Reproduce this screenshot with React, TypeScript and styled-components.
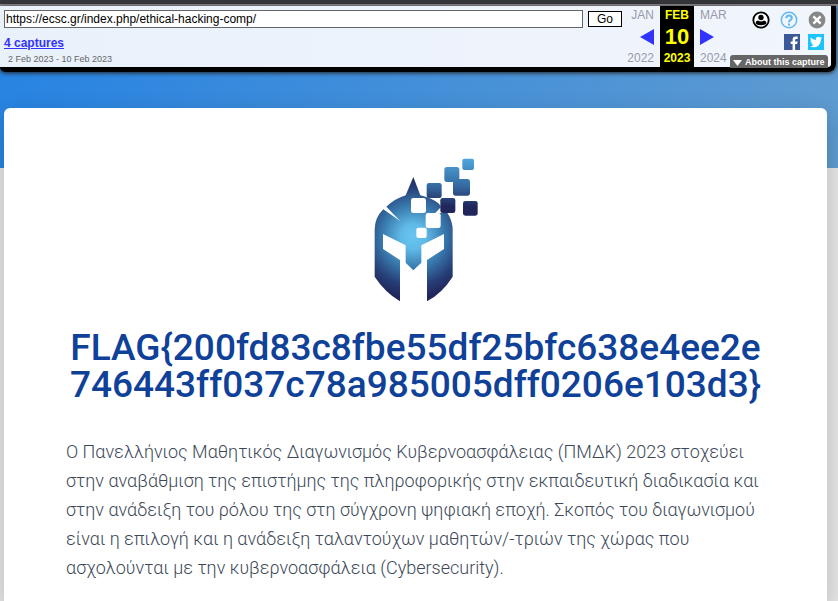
import React from "react";
import styled, { createGlobalStyle } from "styled-components";

const GlobalStyle = createGlobalStyle`
  * { box-sizing: border-box; }
  body {
    margin: 0;
    background: #e6e6e6;
    font-family: Roboto, "Noto Sans", sans-serif;
  }
`;

const Page = styled.div`
  min-height: 100vh;
  overflow: hidden;
  display: flex;
  flex-direction: column;
  background: linear-gradient(100deg, #2783e2 0%, #5f9bd0 100%) top / 100% 168px no-repeat;
`;

const BrowserEdge = styled.div`
  height: 6px;
  background: #35363a;
  border-bottom: 2px solid #88868b;
`;

const Toolbar = styled.header`
  display: flex;
  align-items: stretch;
  height: 66px;
  margin-right: 2px;
  padding-left: 4px;
  border: solid #000;
  border-width: 0 5px 5px 0;
  border-radius: 0 0 8px 5px;
  background: linear-gradient(90deg, #e9f1fb, #f1f5fc);
  box-shadow: 0 1px 4px #222;
  font-family: "Liberation Sans", Arial, sans-serif;
`;

const Lookup = styled.div`
  flex: 1;
  min-width: 0;
  padding-top: 4px;
`;

const UrlForm = styled.form`
  display: flex;
  align-items: center;
  gap: 5px;
`;

const UrlInput = styled.input`
  flex: 1;
  min-width: 0;
  height: 18px;
  padding: 0 1px;
  border: 1px solid #666;
  border-radius: 0;
  background: #fff;
  color: #000;
  font: 12px "Liberation Sans", Arial, sans-serif;
`;

const GoButton = styled.button`
  width: 34px;
  height: 16px;
  padding: 0;
  border: 1px solid #000;
  background: #fff;
  color: #000;
  font: 12px/14px "Liberation Sans", Arial, sans-serif;
`;

const CapturesLink = styled.a`
  display: block;
  width: max-content;
  margin-top: 8px;
  color: #33f;
  font-size: 12px;
  line-height: 14px;
  font-weight: bold;
`;

const CaptureRange = styled.div`
  padding: 4px 0 0 4px;
  color: #666;
  font-size: 9px;
  line-height: 10px;
`;

const MonthColumn = styled.div<{ $side?: "left" | "right" }>`
  display: flex;
  flex-direction: column;
  justify-content: space-between;
  align-items: ${(p) => (p.$side === "left" ? "flex-end" : "flex-start")};
  width: ${(p) => (p.$side === "left" ? 38 : 36)}px;
  padding: ${(p) => (p.$side === "left" ? "2px 6px 2px 0" : "2px 0 2px 6px")};
  color: #99a;
  font-size: 12px;
  line-height: 14px;
`;

const CurrentDate = styled.div`
  display: flex;
  flex-direction: column;
  justify-content: space-between;
  align-items: center;
  width: 34px;
  padding: 2px 0;
  background: #000;
  color: #ff0;
  font-size: 12px;
  line-height: 14px;
  font-weight: bold;
`;

const Day = styled.span`
  font-size: 22px;
  line-height: 24px;
`;

const StepButton = styled.button`
  display: block;
  padding: 0;
  border: 0;
  background: none;
  line-height: 0;
`;

const Tools = styled.div`
  display: flex;
  flex-direction: column;
  align-items: flex-end;
  width: 101px;
  padding: 5px 3px 0 0;
`;

const IconRow = styled.div<{ $gap: number; $inset: number }>`
  display: flex;
  gap: ${(p) => p.$gap}px;
  padding-right: ${(p) => p.$inset}px;
  margin-bottom: 5px;
`;

const IconLink = styled.a`
  display: block;
  line-height: 0;
`;

const AboutButton = styled.button`
  display: flex;
  align-items: center;
  gap: 3px;
  flex: none;
  width: 98px;
  height: 13px;
  padding: 2px 3px 0;
  border: 0;
  border-radius: 3px 3px 0 0;
  background: #666;
  color: #fff;
  font: bold 9px/11px "Liberation Sans", Arial, sans-serif;
  white-space: nowrap;
`;

const Card = styled.main`
  flex: 1;
  margin: 36px 11px 0 4px;
  padding: 42px 62px 20px;
  border-radius: 6px 6px 0 0;
  background: #fff;
  box-shadow: 0 8px 24px rgba(0, 0, 0, 0.2);
`;

const Emblem = styled.svg`
  display: block;
  width: 160px;
  height: 160px;
  margin: 0 auto;
`;

const Title = styled.h1`
  margin: 19px 0 34px;
  color: #0f4199;
  font-size: 37px;
  line-height: 37px;
  font-weight: 500;
  text-align: center;
  white-space: nowrap;
`;

const Intro = styled.p`
  margin: 0;
  color: #3c4858;
  font-size: 18px;
  line-height: 29px;
  font-weight: 300;
`;

function Helmet() {
  return (
    <Emblem viewBox="0 0 480 480" role="img" aria-label="Spartan helmet">
      <defs>
        <radialGradient id="metal" gradientUnits="userSpaceOnUse" cx="232" cy="260" r="185">
          <stop offset="0" stopColor="#68c5f1" />
          <stop offset="0.2" stopColor="#60bae7" />
          <stop offset="0.5" stopColor="#397baf" />
          <stop offset="0.8" stopColor="#263d76" />
          <stop offset="1" stopColor="#20265b" />
        </radialGradient>
        <linearGradient id="sky" gradientUnits="userSpaceOnUse" x1="0" y1="25" x2="0" y2="195">
          <stop offset="0" stopColor="#4fa7dd" />
          <stop offset="0.5" stopColor="#34689f" />
          <stop offset="0.85" stopColor="#20265b" />
          <stop offset="1" stopColor="#20265b" />
        </linearGradient>
      </defs>
      <path
        fill="url(#metal)"
        d="M232 81L253 136Q285 143 309 161L315 171L297 190L334 188Q350 213 350 240V380Q318 430 273 454V330L324 297V252L256 286V338L232 361L209 338V286L141 252V297L192 330V454Q146 426 116 380V240Q116 203 142 178L193 214L151 170Q177 146 209 136Z"
      />
      <g fill="url(#sky)">
        <rect x="379" y="26" width="35" height="34" rx="6" />
        <rect x="325" y="51" width="45" height="45" rx="8" />
        <rect x="351" y="87" width="51" height="50" rx="8" />
        <rect x="272" y="99" width="45" height="45" rx="7" />
        <rect x="313" y="144" width="45" height="45" rx="7" />
        <rect x="381" y="153" width="44" height="44" rx="7" />
      </g>
      <g fill="#fff">
        <rect x="225" y="144" width="45" height="45" rx="7" />
        <rect x="269" y="189" width="45" height="45" rx="7" />
        <rect x="241" y="233" width="31" height="31" rx="6" />
      </g>
    </Emblem>
  );
}

function UserIcon() {
  return (
    <svg width="18" height="18" viewBox="0 0 18 18">
      <circle cx="9" cy="9" r="7.7" fill="#fff" stroke="#000" strokeWidth="1.8" />
      <circle cx="9" cy="6.5" r="2.7" />
      <path d="M3.7 13V11.5Q3.7 9.7 6 9.4Q9 11.6 12 9.4Q14.3 9.7 14.3 11.5V13Q9 15.5 3.7 13Z" />
    </svg>
  );
}

function HelpIcon() {
  return (
    <svg width="18" height="18" viewBox="0 0 18 18" fill="none" stroke="#62b8f1">
      <circle cx="9" cy="9" r="7.7" strokeWidth="1.5" />
      <path d="M6.3 7.2Q6.3 4.5 9 4.5Q11.8 4.5 11.8 7Q11.8 8.2 10.2 9.1Q9 9.8 9 11.2" strokeWidth="2" />
      <path d="M9 12.5V14.5" strokeWidth="2" />
    </svg>
  );
}

function CloseIcon() {
  return (
    <svg width="18" height="18" viewBox="0 0 18 18">
      <circle cx="9" cy="9" r="8.4" fill="#888" />
      <path d="M5.4 5.4L12.6 12.6M12.6 5.4L5.4 12.6" stroke="#fff" strokeWidth="2.4" />
    </svg>
  );
}

function FacebookIcon() {
  return (
    <svg width="16" height="16" viewBox="0 0 16 16">
      <path fill="#3b5998" d="M0 0H16V16H0Z" />
      <path fill="#fff" d="M8.6 16V10H6.7V7.5H8.6V5.7Q8.6 2.6 11.7 2.6H13.7V5H12.3Q11.1 5 11.1 6.2V7.5H13.6L13.2 10H11.1V16Z" />
    </svg>
  );
}

function TwitterIcon() {
  return (
    <svg width="16" height="16" viewBox="0 0 16 16">
      <path fill="#1dc4fb" d="M0 0H16V16H0Z" />
      <path fill="#fff" d="M2.7 3.4Q4.9 5.8 7.9 5.9Q7.5 3 10.3 2.7Q11.4 2.7 12.2 3.5L13.8 2.9L12.8 4.5L14.2 4.2L12.9 5.6Q13 9.5 10.3 11.8Q6.6 14.6 2 12.2Q4.4 12.3 5.8 11.1Q4 10.9 3.4 9.3H4.6Q2.5 8.5 2.4 6.5L3.5 6.8Q1.9 5.3 2.7 3.4Z" />
    </svg>
  );
}

function ArchiveToolbar() {
  return (
    <Toolbar>
      <Lookup>
        <UrlForm onSubmit={(e) => e.preventDefault()}>
          <UrlInput aria-label="Page address" defaultValue="https://ecsc.gr/index.php/ethical-hacking-comp/" />
          <GoButton type="submit">Go</GoButton>
        </UrlForm>
        <CapturesLink href="#captures">4 captures</CapturesLink>
        <CaptureRange>2 Feb 2023 - 10 Feb 2023</CaptureRange>
      </Lookup>
      <MonthColumn $side="left">
        <span>JAN</span>
        <StepButton aria-label="Previous capture">
          <svg width="14" height="16"><path d="M14 0V16L0 8Z" fill="#33f" /></svg>
        </StepButton>
        <span>2022</span>
      </MonthColumn>
      <CurrentDate>
        <span>FEB</span>
        <Day>10</Day>
        <span>2023</span>
      </CurrentDate>
      <MonthColumn $side="right">
        <span>MAR</span>
        <StepButton aria-label="Next capture">
          <svg width="14" height="16"><path d="M0 0L14 8L0 16Z" fill="#33f" /></svg>
        </StepButton>
        <span>2024</span>
      </MonthColumn>
      <Tools>
        <IconRow $gap={10} $inset={2}>
          <IconLink href="#account" aria-label="Account"><UserIcon /></IconLink>
          <IconLink href="#help" aria-label="Help"><HelpIcon /></IconLink>
          <StepButton aria-label="Close toolbar"><CloseIcon /></StepButton>
        </IconRow>
        <IconRow $gap={8} $inset={4}>
          <IconLink href="#facebook" aria-label="Facebook"><FacebookIcon /></IconLink>
          <IconLink href="#twitter" aria-label="Twitter"><TwitterIcon /></IconLink>
        </IconRow>
        <AboutButton>
          <svg width="9" height="6"><path d="M0 0H9L4.5 6Z" fill="#fff" /></svg>
          About this capture
        </AboutButton>
      </Tools>
    </Toolbar>
  );
}

export default function App() {
  return (
    <Page>
      <GlobalStyle />
      <BrowserEdge />
      <ArchiveToolbar />
      <Card>
        <Helmet />
        <Title>
          FLAG&#123;200fd83c8fbe55df25bfc638e4ee2e
          <br />
          746443ff037c78a985005dff0206e103d3&#125;
        </Title>
        <Intro>
          Ο Πανελλήνιος Μαθητικός Διαγωνισμός Κυβερνοασφάλειας (ΠΜΔΚ) 2023 στοχεύει στην αναβάθμιση της
          επιστήμης της πληροφορικής στην εκπαιδευτική διαδικασία και στην ανάδειξη του ρόλου της στη
          σύγχρονη ψηφιακή εποχή. Σκοπός του διαγωνισμού είναι η επιλογή και η ανάδειξη ταλαντούχων
          μαθητών/-τριών της χώρας που ασχολούνται με την κυβερνοασφάλεια (Cybersecurity).
        </Intro>
      </Card>
    </Page>
  );
}
